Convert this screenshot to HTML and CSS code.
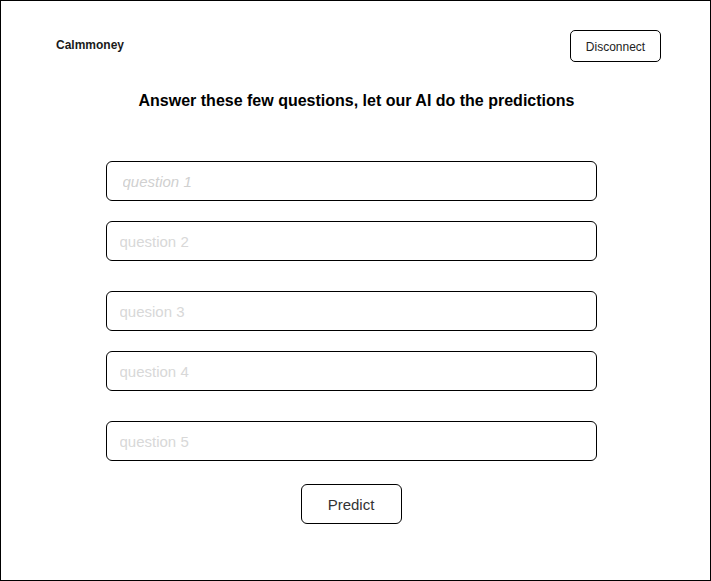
FILE: index.html
```html
<!DOCTYPE html>
<html>
<head>
<meta charset="utf-8">
<link rel="stylesheet" href="styles.css">
</head>
<body>
<div class="frame">
  <header class="top">
    <span class="brand">Calmmoney</span>
    <button class="btn btn-small">Disconnect</button>
  </header>
  <h1 class="title">Answer these few questions, let our AI do the predictions</h1>
  <form class="form">
    <input class="field field-italic" placeholder="question 1">
    <input class="field gap-sm" placeholder="question 2">
    <input class="field gap-lg" placeholder="quesion 3">
    <input class="field gap-sm" placeholder="question 4">
    <input class="field gap-lg" placeholder="question 5">
    <button type="button" class="btn btn-predict">Predict</button>
  </form>
</div>
</body>
</html>
```
FILE: styles.css
```css
* { box-sizing: border-box; }
html, body { margin: 0; padding: 0; background: #fff; }
body { font-family: "Liberation Sans", Arial, sans-serif; color: #000; }
.frame {
  width: 711px;
  height: 581px;
  border: 1px solid #000;
  display: flex;
  flex-direction: column;
}
.top {
  display: flex;
  justify-content: space-between;
  align-items: flex-start;
  padding: 29px 49px 0 55px;
}
.brand {
  font-size: 12px;
  font-weight: bold;
  color: #1a1a1a;
  margin-top: 8px;
}
.btn {
  font-family: "Liberation Sans", Arial, sans-serif;
  background: #fff;
  border: 1px solid #000;
  border-radius: 5px;
  color: #222;
  padding: 0;
  cursor: pointer;
}
.btn-small {
  width: 91px;
  height: 32px;
  font-size: 12px;
  padding-top: 1px;
}
.title {
  margin: 0;
  margin-top: 29px;
  font-size: 16px;
  font-weight: bold;
  text-align: center;
  line-height: 20px;
  padding-left: 2px;
}
.form {
  display: flex;
  flex-direction: column;
  align-items: center;
  margin-top: 50px;
  padding-right: 9px;
}
.field {
  width: 491px;
  height: 40px;
  border: 1px solid #000;
  border-radius: 6px;
  padding: 0 13px;
  font-family: "Liberation Sans", Arial, sans-serif;
  font-size: 15px;
  outline: none;
}
.field::placeholder { color: #d8d8d8; }
.field-italic { font-style: italic; padding-left: 16px; }
.field-italic::placeholder { color: #d0d0d0; }
.gap-sm { margin-top: 20px; }
.gap-lg { margin-top: 30px; }
.btn-predict {
  margin-top: 23px;
  width: 101px;
  height: 40px;
  font-size: 15px;
  border-radius: 6px;
  color: #333;
}
```
